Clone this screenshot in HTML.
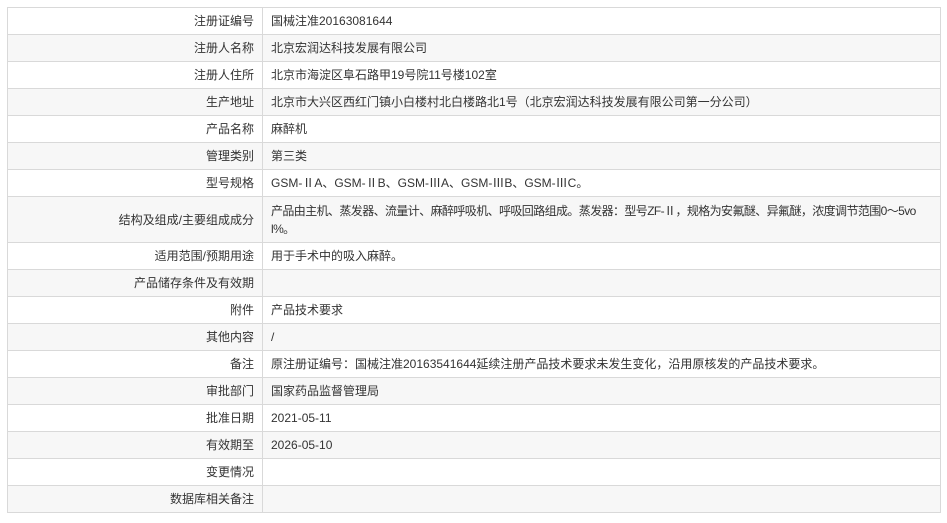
<!DOCTYPE html>
<html><head><meta charset="utf-8"><style>
body{margin:0;background:#fff;font-family:"Liberation Sans","Noto Sans CJK SC",sans-serif;font-size:12px;color:#333}
table{position:absolute;left:7px;top:7px;width:934px;border-collapse:collapse;table-layout:fixed}
td{border:1px solid #d9d9d9;height:26px;padding:0 8px;line-height:18px;overflow:hidden}
td.l{text-align:right;padding-right:8px}
tr:nth-child(even) td{background:#f7f7f7}
</style></head><body>
<table>
<colgroup><col style="width:255px"><col></colgroup>
<tr><td class="l">注册证编号</td><td>国械注准20163081644</td></tr>
<tr><td class="l">注册人名称</td><td>北京宏润达科技发展有限公司</td></tr>
<tr><td class="l">注册人住所</td><td>北京市海淀区阜石路甲19号院11号楼102室</td></tr>
<tr><td class="l">生产地址</td><td>北京市大兴区西红门镇小白楼村北白楼路北1号（北京宏润达科技发展有限公司第一分公司）</td></tr>
<tr><td class="l">产品名称</td><td>麻醉机</td></tr>
<tr><td class="l">管理类别</td><td>第三类</td></tr>
<tr><td class="l">型号规格</td><td>GSM-ⅡA、GSM-ⅡB、GSM-ⅢA、GSM-ⅢB、GSM-ⅢC。</td></tr>
<tr><td class="l" style="height:45px">结构及组成/主要组成成分</td><td style="white-space:nowrap;letter-spacing:-0.6px">产品由主机、蒸发器、流量计、麻醉呼吸机、呼吸回路组成。蒸发器：型号ZF-Ⅱ，规格为安氟醚、异氟醚，浓度调节范围0～5vo<br>l%。</td></tr>
<tr><td class="l" style="height:25.8px">适用范围/预期用途</td><td>用于手术中的吸入麻醉。</td></tr>
<tr><td class="l" style="height:25.8px">产品储存条件及有效期</td><td></td></tr>
<tr><td class="l" style="height:25.8px">附件</td><td>产品技术要求</td></tr>
<tr><td class="l" style="height:25.8px">其他内容</td><td>/</td></tr>
<tr><td class="l" style="height:25.8px">备注</td><td>原注册证编号：国械注准20163541644延续注册产品技术要求未发生变化，沿用原核发的产品技术要求。</td></tr>
<tr><td class="l" style="height:25.8px">审批部门</td><td>国家药品监督管理局</td></tr>
<tr><td class="l" style="height:25.8px">批准日期</td><td>2021-05-11</td></tr>
<tr><td class="l" style="height:25.8px">有效期至</td><td>2026-05-10</td></tr>
<tr><td class="l" style="height:25.8px">变更情况</td><td></td></tr>
<tr><td class="l" style="height:25.8px">数据库相关备注</td><td></td></tr>
</table>
</body></html>
